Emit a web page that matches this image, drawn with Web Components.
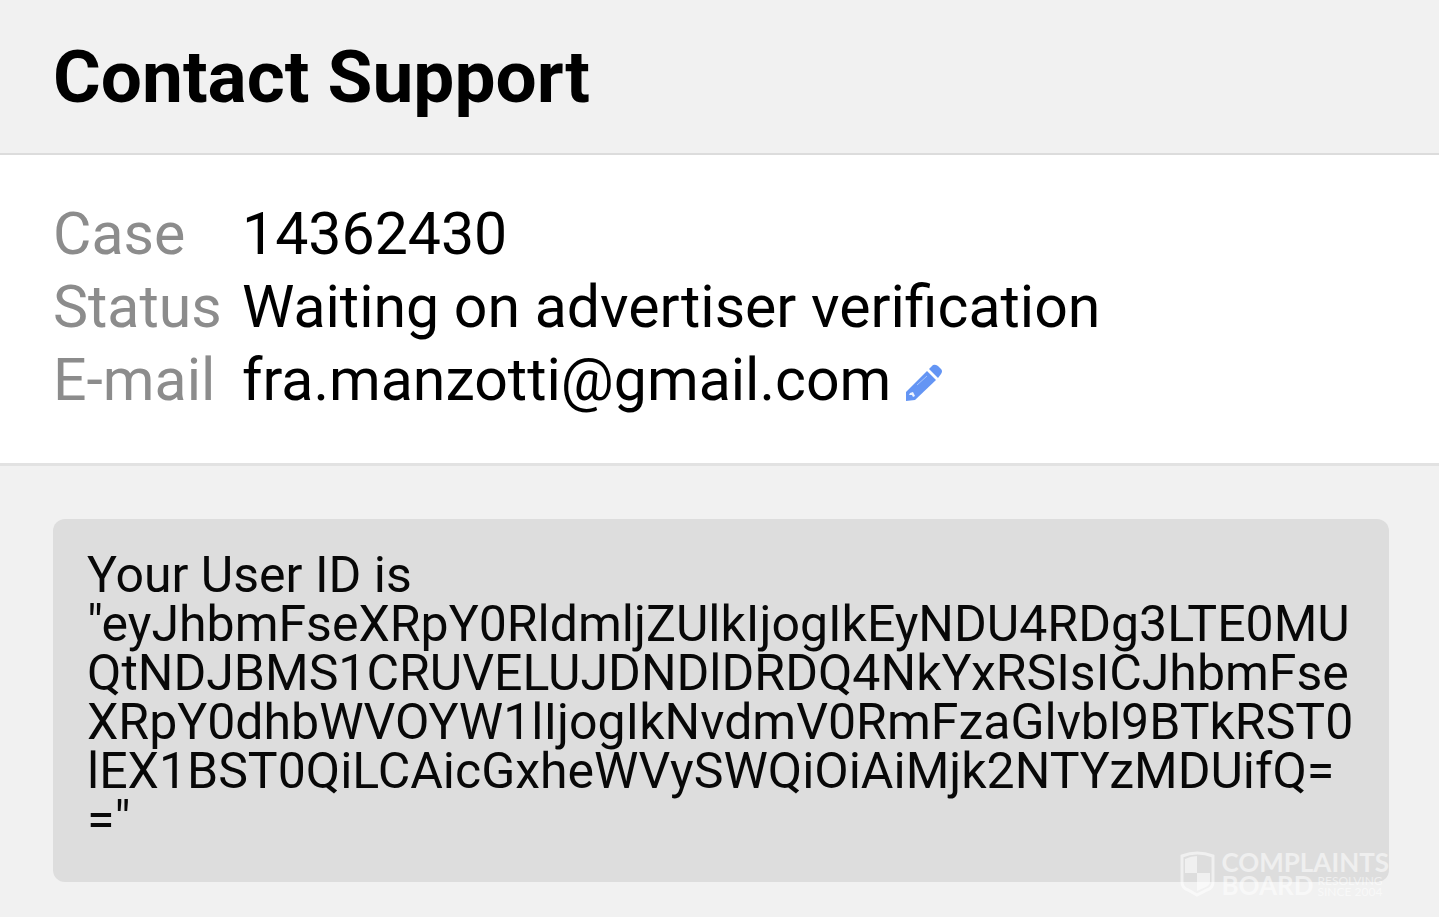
<!DOCTYPE html>
<html lang="en">
<head>
<meta charset="utf-8">
<meta name="viewport" content="width=device-width, initial-scale=1">
<title>Contact Support</title>
<style>
  body { margin: 0; background: #f1f1f1; color: #000; font-family: Roboto, sans-serif; }
</style>
</head>
<body>
<support-page>
  <page-header slot="header">Contact Support</page-header>
  <case-details>
    <case-field label="Case">14362430</case-field>
    <case-field label="Status">Waiting on advertiser verification</case-field>
    <case-field label="E-mail">fra.manzotti@gmail.com<edit-button slot="action" label="Edit e-mail"></edit-button></case-field>
  </case-details>
  <message-card>Your User ID is "eyJhbmFseXRpY0RldmljZUlkIjogIkEyNDU4RDg3LTE0MUQtNDJBMS1CRUVELUJDNDlDRDQ4NkYxRSIsICJhbmFseXRpY0dhbWVOYW1lIjogIkNvdmV0RmFzaGlvbl9BTkRST0lEX1BST0QiLCAicGxheWVySWQiOiAiMjk2NTYzMDUifQ=="</message-card>
  <brand-watermark slot="watermark"></brand-watermark>
</support-page>
<script>
  function define(name, html, setup) {
    const template = document.createElement('template');
    template.innerHTML = html;
    customElements.define(name, class extends HTMLElement {
      constructor() {
        super();
        this.attachShadow({ mode: 'open' }).append(template.content.cloneNode(true));
      }
      connectedCallback() { if (setup) setup(this, this.shadowRoot); }
    });
  }

  define('support-page', `
    <style>
      :host { display: block; position: relative; }
      main { display: block; padding-bottom: 34px; }
    </style>
    <slot name="header"></slot>
    <main><slot></slot></main>
    <slot name="watermark"></slot>
  `);

  define('page-header', `
    <style>
      :host { display: block; }
      header { padding: 36px 53px 35px; border-bottom: 2px solid #dcdcdc; }
      h1 { margin: 0; font-size: 73px; line-height: 82px; font-weight: 700; }
    </style>
    <header><h1><slot></slot></h1></header>
  `);

  define('case-details', `
    <style>
      :host { display: block; background: #fff; padding: 42px 53px 47px; border-bottom: 3px solid #e2e2e2; }
    </style>
    <slot></slot>
  `);

  define('case-field', `
    <style>
      :host { display: block; font-size: 59px; line-height: 73px; }
      dl { display: grid; grid-template-columns: 165px 1fr; column-gap: 24px; margin: 0; }
      dt { color: #8c8c8c; }
      dd { margin: 0; display: flex; align-items: center; gap: 13px; min-width: 0; }
    </style>
    <dl><dt></dt><dd><span><slot></slot></span><slot name="action"></slot></dd></dl>
  `, (host, root) => { root.querySelector('dt').textContent = host.getAttribute('label'); });

  define('edit-button', `
    <style>
      :host { display: flex; }
      button { display: flex; margin: 0; padding: 6px 0 0; border: 0; background: none; cursor: pointer; }
    </style>
    <button type="button">
      <svg width="40" height="40" viewBox="0 0 40 40" aria-hidden="true">
        <path fill="#6495f4" d="M2 29 23 8 32 17 11 37 2 38Z"/>
        <path fill="#6495f4" d="M25 6 29 2Q31 1 34 3L37 6Q39 8 37 11L34 15Z"/>
        <path fill="none" stroke="#a9c6fb" stroke-width="1" d="M13 22 23 13"/>
        <path fill="#eef4ff" d="M6 30 9 29 11 33 9 34 8 32 5 32Z"/>
      </svg>
    </button>
  `, (host, root) => { root.querySelector('button').setAttribute('aria-label', host.getAttribute('label')); });

  define('message-card', `
    <style>
      :host { display: block; margin: 53px 50px 0 53px; padding: 32px 34px 37px; border-radius: 12px; background: #ddd; }
      p { margin: 0; font-size: 50px; line-height: 49px; overflow-wrap: anywhere; color: #080808; }
    </style>
    <p><slot></slot></p>
  `);

  define('brand-watermark', `
    <style>
      :host { position: absolute; right: 50px; bottom: 19px; display: flex; align-items: center; gap: 6px;
              color: rgba(255, 255, 255, .55); font-family: Lato, sans-serif; pointer-events: none; }
      svg { display: block; }
      .name { font-size: 26px; line-height: 23px; font-weight: 700; }
      .row { display: flex; align-items: center; gap: 4px; }
      .tag { font-size: 12px; line-height: 11px; font-weight: 400; }
    </style>
    <svg width="35" height="46" viewBox="0 0 35 46" aria-hidden="true">
      <path fill="none" stroke="currentColor" stroke-width="3" d="M2 5Q17 -1 33 5V31Q33 37 27 39L17 44 8 39Q2 37 2 31Z"/>
      <path fill="currentColor" d="M5 8Q11 5 17 5V22H5ZM17 22H30V31Q30 34 26 36L17 40Z"/>
    </svg>
    <div class="name">
      <div>COMPLAINTS</div>
      <div class="row"><span>BOARD</span><span class="tag">RESOLVING<br>SINCE 2004</span></div>
    </div>
  `);
</script>
</body>
</html>
